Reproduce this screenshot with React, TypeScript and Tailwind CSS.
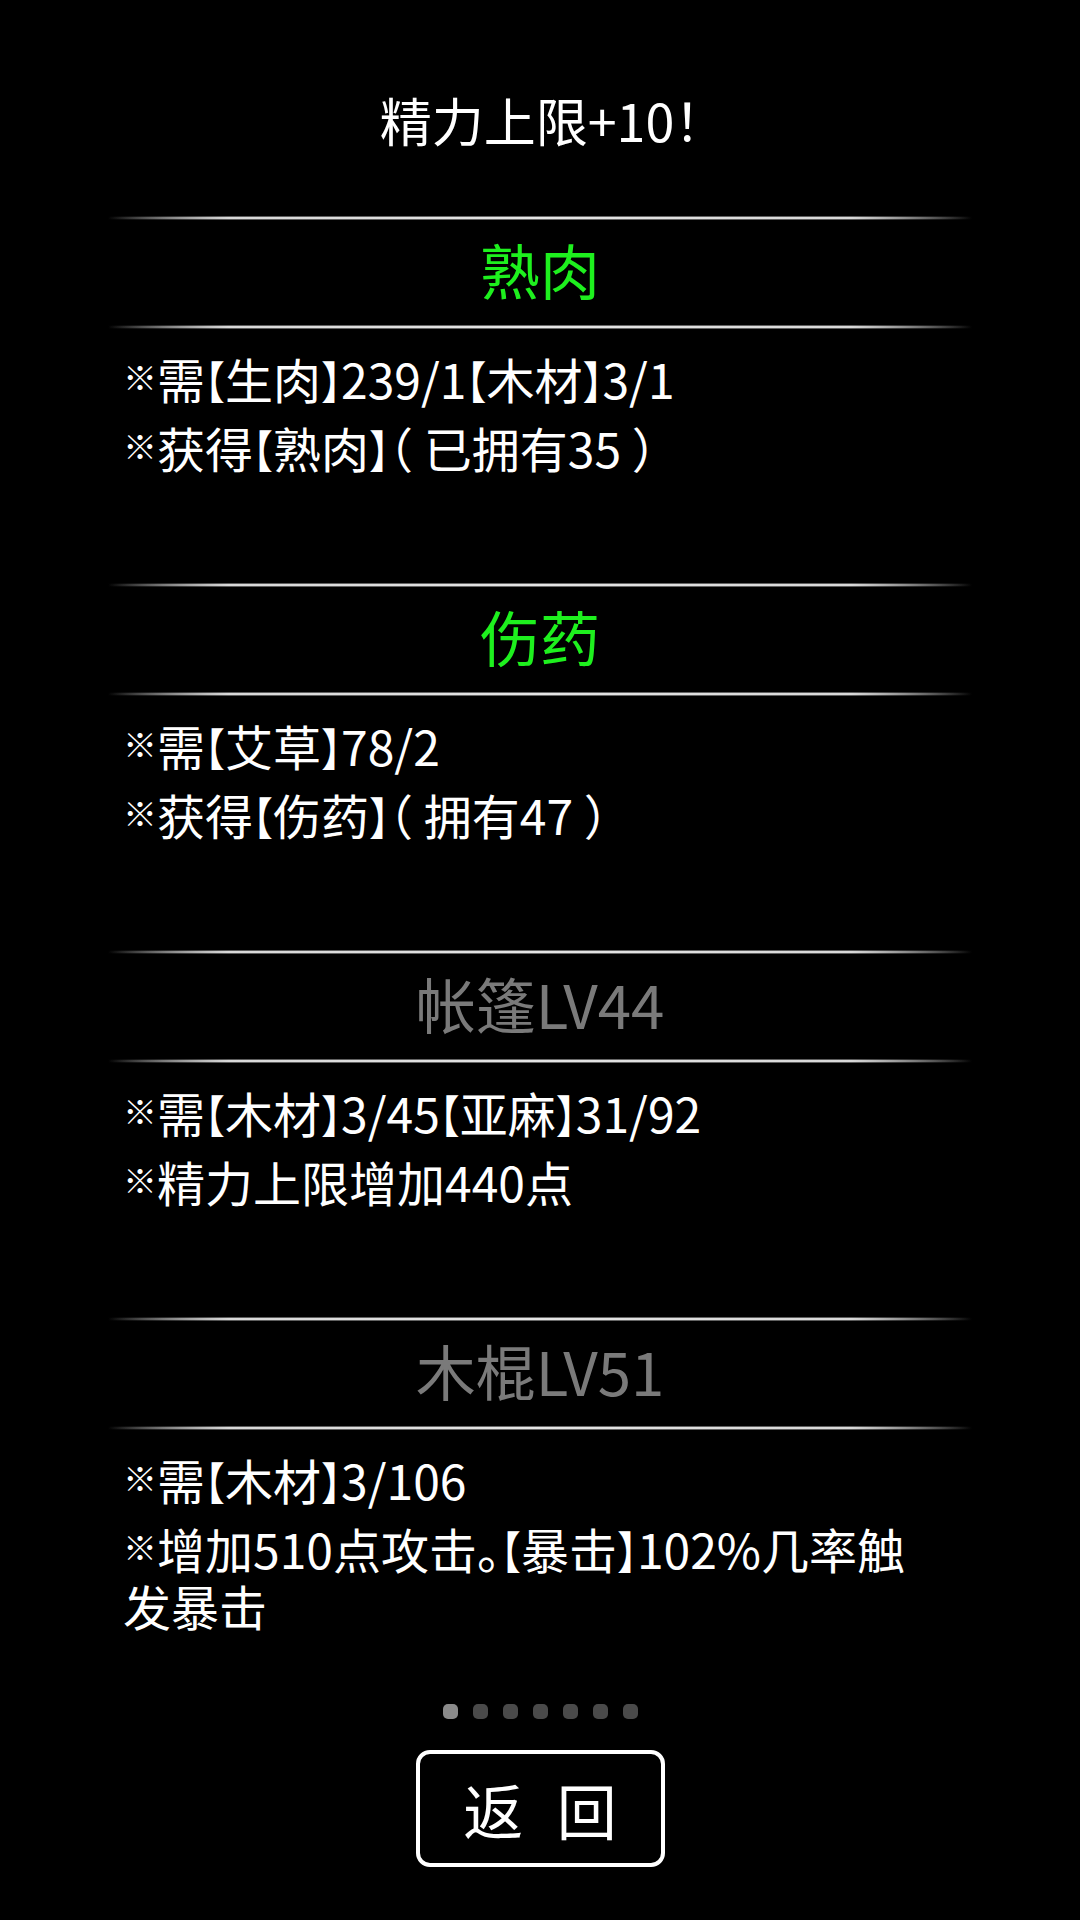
import React from 'react'

type Section = {
  title: string
  active: boolean
  lines: string[][]
}

const Mark = () => (
  <span className="relative -top-[8px] inline-block w-[34px] text-[34px] leading-none">※</span>
)

// 【】は少し小さく、幅を詰めて表示する
function Bracketed({ text }: { text: string }) {
  const parts = text.split(/(【|】)/)
  return (
    <>
      {parts.map((p, i) =>
        p === '【' || p === '】' ? (
          <span key={i} className="inline-block origin-bottom scale-y-[1.12] text-[40px] leading-none">
            {p}
          </span>
        ) : (
          <React.Fragment key={i}>{p}</React.Fragment>
        ),
      )}
    </>
  )
}

const sections: Section[] = [
  {
    title: '熟肉',
    active: true,
    lines: [['需【生肉】239/1【木材】3/1'], ['获得【熟肉】（ 已拥有35 ）']],
  },
  {
    title: '伤药',
    active: true,
    lines: [['需【艾草】78/2'], ['获得【伤药】（ 拥有47 ）']],
  },
  {
    title: '帐篷LV44',
    active: false,
    lines: [['需【木材】3/45【亚麻】31/92'], ['精力上限增加440点']],
  },
  {
    title: '木棍LV51',
    active: false,
    lines: [['需【木材】3/106'], ['增加510点攻击。【暴击】102%几率触', '发暴击']],
  },
]

function Divider() {
  return (
    <div className="flex h-[4px] flex-col bg-[linear-gradient(to_right,transparent,#5c5c5c_14%,#6a6a6a_50%,#5c5c5c_86%,transparent)]">
      <div className="h-[1px]" />
      <div className="h-[2px] bg-[linear-gradient(to_right,transparent,#d8d8d8_14%,#e4e4e4_50%,#d8d8d8_86%,transparent)]" />
    </div>
  )
}

export default function App() {
  return (
    <div
      className="flex min-h-[1920px] w-[1080px] flex-col bg-black text-white [font-feature-settings:'halt']"
      style={{ fontFamily: '"Noto Sans CJK SC", "Noto Sans", sans-serif' }}
    >
      {/* タイトル */}
      <div className="pt-[90px] text-center text-[52px] leading-[60px]">精力上限+10！</div>

      <div className="mt-[66px] px-[108px]">
        {sections.map((s) => (
          <div key={s.title}>
            <Divider />
            <div
              className={`flex h-[105px] items-center justify-center pb-[8px] text-[60px] leading-none ${
                s.active ? 'text-[#1ef01e]' : 'text-[#7a7a7a]'
              }`}
            >
              {s.title}
            </div>
            <Divider />
            <div className="flex h-[254px] flex-col gap-[12px] pl-[15px] pt-[21px] text-[48px] leading-[57px]">
              {s.lines.map((rows, i) => (
                <div key={i}>
                  {rows.map((row, j) => (
                    <div key={j} className="h-[57px]">
                      {j === 0 && <Mark />}
                      <Bracketed text={row} />
                    </div>
                  ))}
                </div>
              ))}
            </div>
          </div>
        ))}
      </div>

      {/* ページインジケーター */}
      <div className="mt-[20px] flex justify-center gap-[15px]">
        {[0, 1, 2, 3, 4, 5, 6].map((i) => (
          <div
            key={i}
            className={`h-[15px] w-[15px] rounded-[5px] ${i === 0 ? 'bg-[#8a8a8a]' : 'bg-[#4a4a4a]'}`}
          />
        ))}
      </div>

      <div className="mt-[31px] flex justify-center">
        <button className="flex h-[117px] w-[249px] items-center justify-center rounded-[14px] border-[4px] border-white bg-black text-[60px] leading-none text-white [word-spacing:20px]">
          返 回
        </button>
      </div>
    </div>
  )
}
